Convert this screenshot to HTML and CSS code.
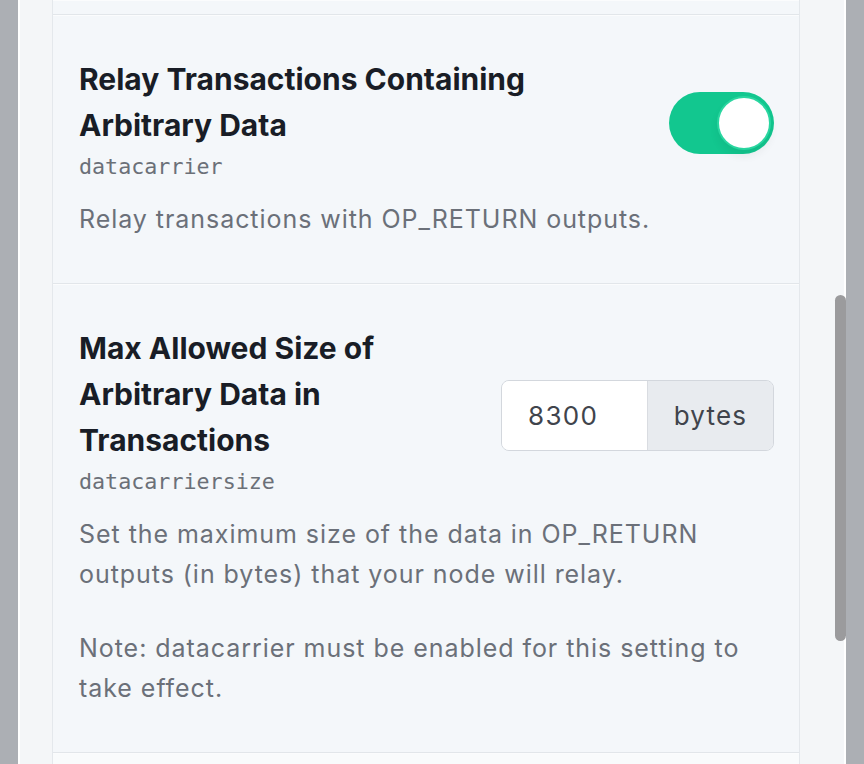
FILE: index.html
```html
<!DOCTYPE html>
<html lang="en">
<head>
  <meta charset="UTF-8" />
  <meta name="viewport" content="width=device-width, initial-scale=1.0" />
  <title>Node Settings</title>
  <link rel="stylesheet" href="styles.css">
</head>
<body>
  <div class="panel">
    <div class="settings-card">
      <div class="setting setting-tail"></div>

      <div class="setting">
        <div class="setting-head">
          <div class="setting-label">
            <h3>Relay Transactions Containing Arbitrary Data</h3>
            <code>datacarrier</code>
          </div>
          <label class="switch">
            <input type="checkbox" checked />
            <span class="knob"></span>
          </label>
        </div>
        <p class="setting-desc">Relay transactions with OP_RETURN outputs.</p>
      </div>

      <div class="setting">
        <div class="setting-head">
          <div class="setting-label">
            <h3>Max Allowed Size of Arbitrary Data in Transactions</h3>
            <code>datacarriersize</code>
          </div>
          <div class="input-group">
            <input type="number" value="8300" />
            <span class="addon">bytes</span>
          </div>
        </div>
        <p class="setting-desc">Set the maximum size of the data in OP_RETURN outputs (in bytes) that your node will relay.</p>
        <p class="setting-desc note">Note: datacarrier must be enabled for this setting to take effect.</p>
      </div>

      <div class="setting setting-next"></div>
    </div>

    <div class="scroll-thumb"></div>
  </div>
</body>
</html>
```

FILE: styles.css
```css
* {
  box-sizing: border-box;
  margin: 0;
  padding: 0;
  font-family: 'Inter', 'Noto Sans', sans-serif;
}

html, body {
  height: 100%;
  overflow: hidden;
}

body {
  background: #acafb4;
  padding: 0 18px;
}

.panel {
  position: relative;
  height: 100%;
  background: #f4f6f8;
  border-left: 2px solid #fff;
  border-right: 2px solid #fff;
  padding: 0 44px 0 32px;
}

.settings-card {
  background: #f4f7fa;
  border-left: 1px solid #e4e8ec;
  border-right: 1px solid #e4e8ec;
}

.setting {
  border-top: 1px solid #e2e6ea;
  box-shadow: inset 0 1px 0 #fbfcfd;
  padding: 41px 25px 44px 26px;
}

.setting-tail {
  border-top: none;
  height: 14px;
  padding: 0;
}

.setting-next {
  height: 40px;
  background: #f9fbfc;
}

.setting-head {
  display: flex;
  align-items: center;
  justify-content: space-between;
  gap: 32px;
}

.setting-label {
  flex: 1;
  min-width: 0;
  max-width: 520px;
  padding-bottom: 4px;
}

.setting-label h3 {
  font-size: 30px;
  line-height: 46px;
  font-weight: 700;
  color: #191d26;
}

.setting-label code {
  display: block;
  font-family: 'DejaVu Sans Mono', monospace;
  font-size: 21.7px;
  line-height: 38px;
  color: #6b7078;
}

.setting-desc {
  margin-top: 9px;
  font-size: 25px;
  line-height: 40px;
  letter-spacing: 0.95px;
  color: #6b7079;
}

.setting-desc.note {
  margin-top: 34px;
}

.switch {
  position: relative;
  flex: none;
  width: 105px;
  height: 62px;
  border-radius: 31px;
  background: #12c78f;
  cursor: pointer;
}

.switch input {
  display: none;
}

.knob {
  position: absolute;
  top: 4px;
  right: 3px;
  width: 54px;
  height: 54px;
  border-radius: 50%;
  background: #fff;
  border: 2px solid #2ad6a0;
  box-shadow: 0 6px 10px rgba(0, 0, 0, 0.06);
}

.input-group {
  flex: none;
  display: flex;
  width: 273px;
  height: 71px;
  border: 1px solid #d3d7dd;
  border-radius: 8px;
  overflow: hidden;
}

.input-group input {
  width: 146px;
  border: none;
  border-right: 1px solid #d9dce1;
  background: #fff;
  padding: 0 0 0 26px;
  font-size: 26px;
  letter-spacing: 1.3px;
  color: #40444c;
  outline: none;
  -moz-appearance: textfield;
}

.input-group input::-webkit-inner-spin-button,
.input-group input::-webkit-outer-spin-button {
  -webkit-appearance: none;
}

.addon {
  flex: 1;
  display: flex;
  align-items: center;
  justify-content: center;
  background: #e8ebef;
  font-size: 26px;
  letter-spacing: 1.2px;
  color: #40444c;
}

.scroll-thumb {
  position: absolute;
  top: 295px;
  right: -2px;
  width: 11px;
  height: 346px;
  border-radius: 6px;
  background: #9b9b9d;
}
```
